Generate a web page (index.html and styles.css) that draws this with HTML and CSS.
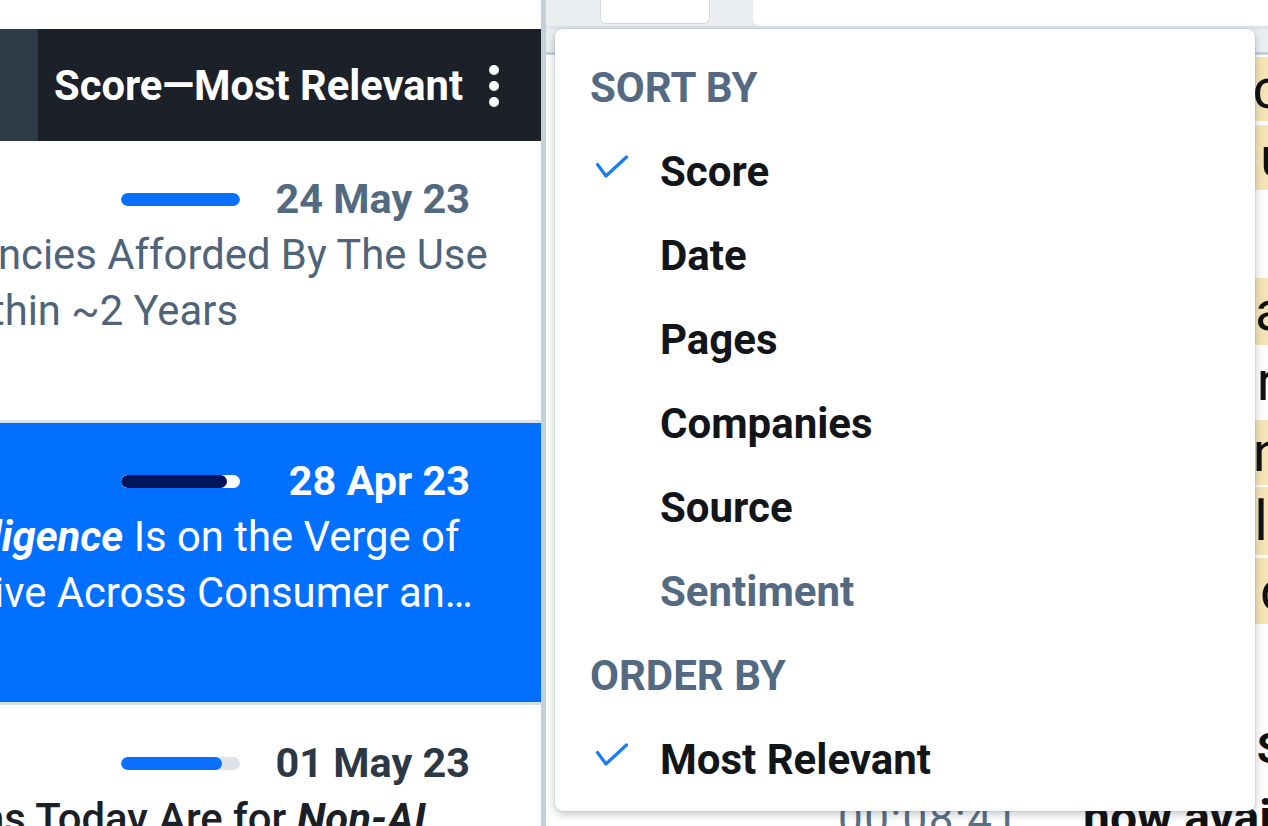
FILE: index.html
```html
<!DOCTYPE html>
<html lang="en">
<head>
<meta charset="utf-8">
<title>Sort menu</title>
<link rel="stylesheet" href="styles.css">
</head>
<body>
<div class="app">
  <section class="left">
    <div class="left-top"></div>
    <header class="header">
      <div class="header-side"></div>
      <div class="header-title">
        <span>Score—Most Relevant</span>
        <svg class="kebab" width="12" height="42" viewBox="0 0 12 42" aria-hidden="true">
          <circle cx="6" cy="5" r="5" fill="#fff"/>
          <circle cx="6" cy="21" r="5" fill="#fff"/>
          <circle cx="6" cy="37" r="5" fill="#fff"/>
        </svg>
      </div>
    </header>
    <div class="list">
      <article class="item">
        <div class="meta">
          <div class="bar"><div class="bar-fill" style="width:100%"></div></div>
          <div class="date">24 May 23</div>
        </div>
        <div class="title">
          <span class="line cut-a">ncies Afforded By The Use</span>
          <span class="line cut-b">thin ~2 Years</span>
        </div>
      </article>
      <article class="item selected">
        <div class="meta">
          <div class="bar"><div class="bar-fill" style="width:89%"></div></div>
          <div class="date">28 Apr 23</div>
        </div>
        <div class="title">
          <span class="line cut-c"><b><i>ligence</i></b> Is on the Verge of</span>
          <span class="line cut-e">ive Across Consumer an…</span>
        </div>
      </article>
      <article class="item unread">
        <div class="meta">
          <div class="bar"><div class="bar-fill" style="width:85%"></div></div>
          <div class="date">01 May 23</div>
        </div>
        <div class="title">
          <span class="line cut-d">ns Today Are for <b><i>Non-AI</i></b></span>
          <span class="line cut-a">Workloads</span>
        </div>
      </article>
    </div>
  </section>

  <div class="splitter"></div>

  <section class="right">
    <div class="right-head">
      <div class="tabs">
        <div class="tab tab-small"></div>
        <div class="tab tab-wide"></div>
      </div>
    </div>
    <div class="transcript">
      <div class="t-line hl r1"><span class="t-text">on the cost of running</span></div>
      <div class="t-line hl r2"><span class="t-text">for the usage of these</span></div>
      <div class="t-line r-blank"><span class="t-text">So.</span></div>
      <div class="t-line hl r3"><span class="t-text">what's actually going</span></div>
      <div class="t-line r4"><span class="t-text">the more relevant</span></div>
      <div class="t-line hl r5"><span class="t-text">position, and</span></div>
      <div class="t-line hl r6"><span class="t-text">the real value</span></div>
      <div class="t-line hl r7"><span class="t-text">for the customer</span></div>
      <div class="t-name">Michael Smith</div>
      <div class="t-row">
        <span class="t-time">00:08:41</span>
        <span class="t-bold">now available</span>
      </div>
    </div>

    <div class="menu" role="menu">
      <div class="menu-row menu-head">SORT BY</div>
      <div class="menu-row menu-item">
        <span class="check-slot">
          <svg class="check" width="32" height="24" viewBox="0 0 32 24" aria-hidden="true">
            <path d="M1.5 9.5 L10 21 L30.5 2" fill="none" stroke="#1a7cf4" stroke-width="3.2" stroke-linecap="round" stroke-linejoin="round"/>
          </svg>
        </span>
        <span>Score</span>
      </div>
      <div class="menu-row menu-item"><span class="check-slot"></span><span>Date</span></div>
      <div class="menu-row menu-item"><span class="check-slot"></span><span>Pages</span></div>
      <div class="menu-row menu-item"><span class="check-slot"></span><span>Companies</span></div>
      <div class="menu-row menu-item"><span class="check-slot"></span><span>Source</span></div>
      <div class="menu-row menu-item muted"><span class="check-slot"></span><span>Sentiment</span></div>
      <div class="menu-row menu-head">ORDER BY</div>
      <div class="menu-row menu-item">
        <span class="check-slot">
          <svg class="check" width="32" height="24" viewBox="0 0 32 24" aria-hidden="true">
            <path d="M1.5 9.5 L10 21 L30.5 2" fill="none" stroke="#1a7cf4" stroke-width="3.2" stroke-linecap="round" stroke-linejoin="round"/>
          </svg>
        </span>
        <span>Most Relevant</span>
      </div>
    </div>
  </section>
</div>
</body>
</html>
```

FILE: styles.css
```css
* { box-sizing: border-box; }

html, body {
  margin: 0;
  padding: 0;
}

body {
  width: 1268px;
  height: 826px;
  overflow: hidden;
  background: #fff;
  font-family: Roboto, "Noto Sans", "Liberation Sans", sans-serif;
}

.app {
  display: flex;
  height: 826px;
}

/* ---------- left list panel ---------- */
.left {
  width: 541px;
  flex: none;
  display: flex;
  flex-direction: column;
  overflow: hidden;
  background: #fff;
}

.left-top {
  height: 29px;
  flex: none;
  background: #fff;
}

.header {
  height: 112px;
  flex: none;
  display: flex;
  background: #1c2129;
}

.header-side {
  width: 38px;
  flex: none;
  background: #2d3a48;
}

.header-title {
  flex: 1;
  display: flex;
  align-items: center;
  padding-left: 16px;
  color: #fff;
  font-size: 41.7px;
  font-weight: 700;
  white-space: nowrap;
}

.kebab {
  margin-left: 25px;
  margin-top: 2px;
}

.list {
  display: flex;
  flex-direction: column;
}

.item {
  height: 282px;
  flex: none;
  padding-top: 30px;
  border-bottom: 3px solid #d8dfe5;
  background: #fff;
  overflow: hidden;
}

.meta {
  height: 56px;
  display: flex;
  align-items: center;
  justify-content: flex-end;
  padding-right: 71px;
}

.bar {
  width: 119px;
  height: 13px;
  border-radius: 7px;
  background: #dde3e8;
  overflow: hidden;
}

.bar-fill {
  height: 100%;
  border-radius: 7px;
  background: #0a6ffd;
}

.date {
  width: 230px;
  text-align: right;
  font-size: 41.4px;
  font-weight: 700;
  color: #526a80;
}

.title {
  font-size: 41.8px;
  line-height: 56px;
  color: #4f6479;
  white-space: nowrap;
}

.title .line {
  display: block;
}

.title b { font-weight: 700; }

.cut-a { margin-left: -2px; }
.cut-b { margin-left: -9px; }
.cut-c { margin-left: -9px; }
.cut-d { margin-left: -19px; }
.cut-e { margin-left: -6px; }

.item.selected {
  background: #0270ff;
}

.item.selected .date,
.item.selected .title {
  color: #fff;
}

.item.selected .bar {
  background: #fff;
}

.item.selected .bar-fill {
  background: #001659;
}

.item.unread .date {
  color: #2d3846;
}

.item.unread .title {
  color: #1b2027;
  font-weight: 500;
}

/* ---------- splitter ---------- */
.splitter {
  width: 5px;
  flex: none;
  background: #c4d0d8;
}

/* ---------- right pane ---------- */
.right {
  flex: 1;
  position: relative;
  background: #fff;
  overflow: hidden;
}

.right-head {
  height: 55px;
  background: #eceff2;
  border-bottom: 3px solid #c6d1d9;
}

.tabs {
  display: flex;
  height: 29px;
  border-bottom: 3px solid #dfe5ea;
}

.tab {
  background: #fff;
}

.tab-small {
  margin-left: 54px;
  width: 110px;
  height: 24px;
  border: 1px solid #d3dbe1;
  border-top: none;
  border-radius: 0 0 6px 6px;
}

.tab-wide {
  margin-left: 43px;
  flex: 1;
  height: 26px;
  border-radius: 0 0 0 8px;
}

.transcript {
  background: #fff;
  color: #111;
}

.t-line {
  padding-left: 537px;
  white-space: nowrap;
  font-size: 56px;
  overflow: hidden;
}

.t-line.hl .t-text {
  display: block;
  background: #f6e4b6;
  height: 100%;
}

.r1 { margin-top: 2px; height: 64px; line-height: 64px; }
.r2 { margin-top: 4px; height: 65px; line-height: 65px; }
.r-blank { height: 88px; line-height: 88px; }
.r3 { height: 67px; line-height: 67px; }
.r4 { height: 73px; line-height: 73px; }
.r5 { margin-top: 2px; height: 65px; line-height: 65px; }
.r6 { margin-top: 2px; height: 68px; line-height: 68px; }
.r7 { margin-top: 3px; height: 66px; line-height: 66px; }

.t-name {
  margin-top: 100px;
  height: 50px;
  line-height: 50px;
  padding-left: 551px;
  font-size: 42px;
  font-weight: 700;
  white-space: nowrap;
}

.t-row {
  display: flex;
  align-items: baseline;
  padding-top: 4px;
  height: 80px;
  line-height: 80px;
  white-space: nowrap;
}

.t-time {
  flex: none;
  margin-left: 292px;
  width: 245px;
  font-size: 44px;
  letter-spacing: 1.5px;
  color: #5a6f86;
}

.t-bold {
  flex: none;
  font-size: 48px;
  font-weight: 700;
  color: #111;
}

/* ---------- sort menu ---------- */
.menu {
  position: absolute;
  left: 9px;
  top: 29px;
  width: 700px;
  height: 782px;
  padding: 16px 0 0 35px;
  background: #fff;
  border-radius: 8px;
  box-shadow: 0 3px 10px rgba(30, 45, 60, 0.28), 0 0 0 1px rgba(30, 45, 60, 0.06);
}

.menu-row {
  height: 84px;
  display: flex;
  align-items: center;
  font-size: 42px;
  font-weight: 700;
  white-space: nowrap;
}

.menu-head {
  color: #536a82;
}

.menu-item {
  color: #121619;
}

.menu-item.muted {
  color: #536a82;
}

.check-slot {
  width: 70px;
  flex: none;
  display: flex;
  align-items: center;
}

.check {
  margin-left: 6px;
  margin-top: -8px;
}
```
